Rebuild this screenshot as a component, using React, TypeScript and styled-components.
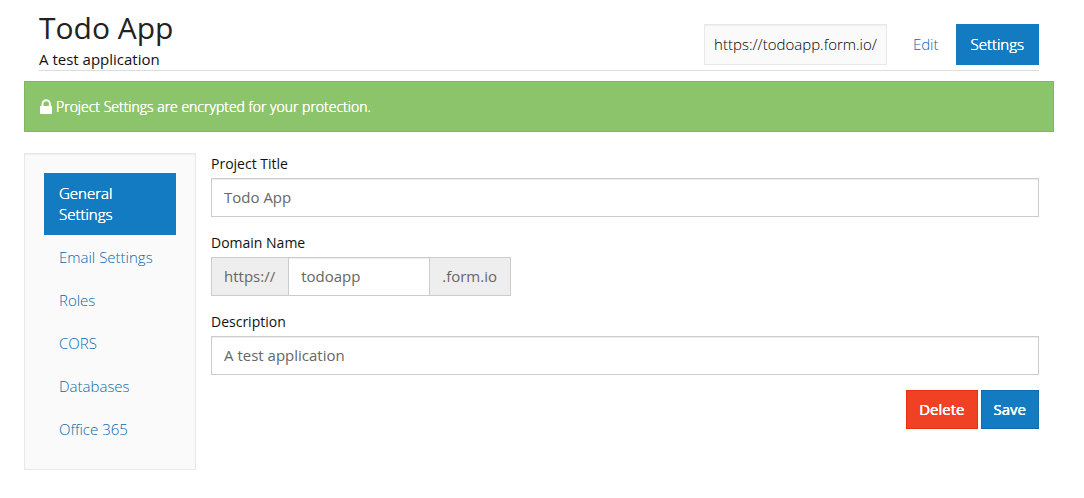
import React from "react";
import styled, { createGlobalStyle } from "styled-components";

const GlobalStyle = createGlobalStyle`
  *, *::before, *::after { box-sizing: border-box; }
  body {
    margin: 0;
    background: #fff;
    color: #222;
    font-family: "Open Sans", "Noto Sans", sans-serif;
    font-size: 15px;
    line-height: 21px;
  }
`;

const Page = styled.main`
  padding: 7px 30px 28px 24px;
`;

const Header = styled.header`
  display: flex;
  justify-content: space-between;
  align-items: flex-end;
  margin: 0 15px 10px;
  border-bottom: 1px solid #ddd;
`;

const Title = styled.h1`
  margin: 0;
  font-size: 30px;
  font-weight: 400;
  line-height: 42px;
`;

const Subtitle = styled.p`
  margin: 0;
  color: #111;
`;

const TopNav = styled.nav`
  display: flex;
  gap: 2px;
  margin-bottom: 5px;
`;

const AddressBox = styled.div`
  margin-right: 9px;
  padding: 9px;
  border: 1px solid #e8e8e8;
  background: #fafafa;
  box-shadow: inset 0 1px 1px rgba(0, 0, 0, 0.05);
  font-weight: 300;
  color: #000;
`;

const NavLink = styled.a<{ $active?: boolean }>`
  display: block;
  padding: 10px 15px;
  background: ${(p) => (p.$active ? "#127bc1" : "transparent")};
  color: ${(p) => (p.$active ? "#fff" : "#0868ae")};
  font-weight: 300;
  text-shadow: ${(p) => (p.$active ? "0 0 0 #fff, 0 0 0 #fff" : "none")};
  text-decoration: none;
`;

const Notice = styled.div`
  display: flex;
  align-items: center;
  gap: 3px;
  margin-bottom: 21px;
  padding: 14px 15px;
  border: 1px solid #7dba5c;
  background: #8cc46b;
  color: #fff;
  font-size: 14px;
  font-weight: 300;
  text-shadow: 0 0 0 #fff, 0 0 0 #fff;
`;

const LockIcon = styled.svg`
  flex: none;
  width: 13px;
  height: 15px;
  fill: currentColor;
`;

const Columns = styled.div`
  display: grid;
  grid-template-columns: minmax(172px, 1fr) 5fr;
  align-items: start;
`;

const Sidebar = styled.nav`
  display: flex;
  flex-direction: column;
  gap: 2px;
  padding: 19px;
  border: 1px solid #e8e8e8;
  background: #fafafa;
  box-shadow: inset 0 1px 1px rgba(0, 0, 0, 0.05);
`;

const Form = styled.form`
  padding: 0 15px;
`;

const Field = styled.div`
  margin-bottom: 15px;
`;

const Label = styled.label`
  display: block;
  margin-bottom: 3px;
  color: #111;
  font-size: 14px;
  line-height: 22px;
`;

const Input = styled.input`
  display: block;
  width: 100%;
  min-width: 0;
  height: 39px;
  padding: 7px 12px 9px;
  border: 1px solid #ccc;
  border-radius: 0;
  background: #fff;
  box-shadow: inset 0 1px 1px rgba(0, 0, 0, 0.075);
  color: #666;
  font: inherit;
`;

const InputGroup = styled.div`
  display: flex;
  width: 300px;
  max-width: 100%;
`;

const Addon = styled.span<{ $side: "left" | "right" }>`
  flex: none;
  padding: 8px 13px 8px 12px;
  border: 1px solid #ccc;
  border-${(p) => (p.$side === "left" ? "right" : "left")}: 0;
  background: #eee;
  color: #666;
`;

const Actions = styled.div`
  display: flex;
  justify-content: flex-end;
  gap: 3px;
`;

const Button = styled.button<{ $danger?: boolean }>`
  height: 39px;
  padding: 8px 12px;
  border: 1px solid ${(p) => (p.$danger ? "#ea2f10" : "#0f6dab")};
  background: ${(p) => (p.$danger ? "#f04124" : "#127bc1")};
  color: #fff;
  font: inherit;
  text-shadow: 0 0 0 #fff, 0 0 0 #fff;
`;

const sections = ["General Settings", "Email Settings", "Roles", "CORS", "Databases", "Office 365"];

export default function App() {
  return (
    <>
      <GlobalStyle />
      <Page>
        <Header>
          <div>
            <Title>Todo App</Title>
            <Subtitle>A test application</Subtitle>
          </div>
          <TopNav aria-label="Project">
            <AddressBox>https://todoapp.form.io/</AddressBox>
            <NavLink href="#edit">Edit</NavLink>
            <NavLink href="#settings" $active>Settings</NavLink>
          </TopNav>
        </Header>
        <Notice role="status">
          <LockIcon viewBox="0 0 13 15" aria-hidden="true">
            <path
              fillRule="evenodd"
              d="M1.500 7V5a4.700 4.700 0 0 1 9.400 0v2h.4q.7 0 .7.700v6.600q0 .7-.7.700H.700q-.7 0-.7-.7V7.700q0-.7.700-.7zM3.500 7h5.400V5a2.700 2.700 0 0 0-5.400 0z"
            />
          </LockIcon>
          <span>Project Settings are encrypted for your protection.</span>
        </Notice>
        <Columns>
          <Sidebar aria-label="Settings sections">
            {sections.map((name, i) => (
              <NavLink key={name} href={`#section-${i}`} $active={i === 0}>{name}</NavLink>
            ))}
          </Sidebar>
          <Form onSubmit={(e) => e.preventDefault()}>
            <Field>
              <Label htmlFor="title">Project Title</Label>
              <Input id="title" defaultValue="Todo App" />
            </Field>
            <Field>
              <Label htmlFor="domain">Domain Name</Label>
              <InputGroup>
                <Addon $side="left">https://</Addon>
                <Input id="domain" defaultValue="todoapp" />
                <Addon $side="right">.form.io</Addon>
              </InputGroup>
            </Field>
            <Field>
              <Label htmlFor="description">Description</Label>
              <Input id="description" defaultValue="A test application" />
            </Field>
            <Actions>
              <Button type="button" $danger>Delete</Button>
              <Button type="submit">Save</Button>
            </Actions>
          </Form>
        </Columns>
      </Page>
    </>
  );
}
